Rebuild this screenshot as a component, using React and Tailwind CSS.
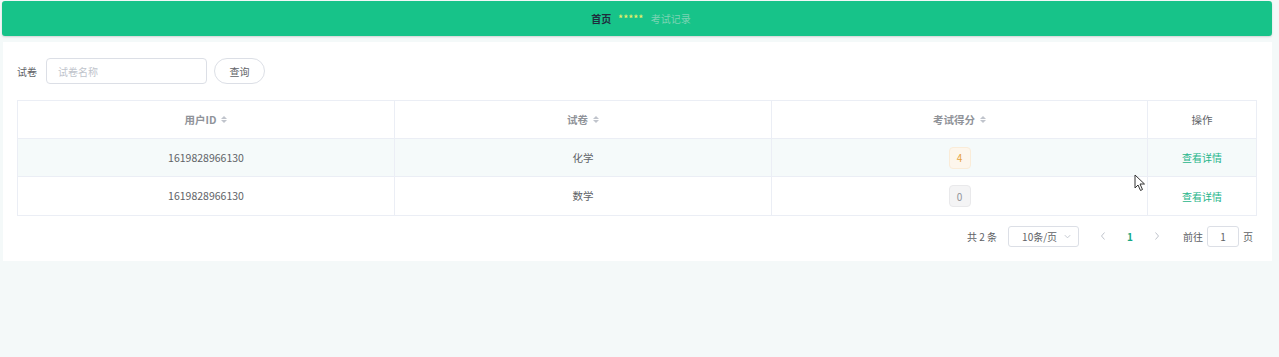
import React from "react";

const rows = [
  { id: "1619828966130", paper: "化学", score: 4 },
  { id: "1619828966130", paper: "数学", score: 0 },
];

const SortIcon = () => (
  <span className="ml-[5px] inline-flex flex-col items-center gap-[1px] align-middle">
    <span className="h-0 w-0 border-x-[3px] border-b-[3px] border-x-transparent border-b-[#c0c4cc]" />
    <span className="h-0 w-0 border-x-[3px] border-t-[3px] border-x-transparent border-t-[#c0c4cc]" />
  </span>
);

const Cursor = () => (
  <svg
    className="absolute left-[1134px] top-[174px]"
    width="12"
    height="18"
    viewBox="0 0 12 18"
  >
    <path
      d="M1 1 L1 14 L4 11 L6.5 16.5 L8.5 15.5 L6 10 L10.5 10 Z"
      fill="#fff"
      stroke="#333"
      strokeWidth="1"
      strokeLinejoin="round"
    />
  </svg>
);

const App = () => {
  return (
    <div
      className="relative h-[357px] w-full overflow-hidden bg-[#f4f9f9] pt-[1px] text-[10.5px] text-[#606266]"
      style={{ fontFamily: '"Noto Sans CJK SC", "Noto Sans", sans-serif' }}
    >
      {/* breadcrumb bar */}
      <div className="mx-[2px] mr-[7px] flex h-[35px] items-center justify-center rounded-[3px] bg-[#17c389] pl-[8px] shadow-[0_1px_2px_rgba(0,0,0,0.15)]">
        <span className="text-[10px] font-bold text-[#1f2d3d]">首页</span>
        <span className="mx-[7px] text-[9px] font-bold tracking-[0.5px] text-[#e8ef6a]">*****</span>
        <span className="text-[10px] text-[#7dd3b4]">考试记录</span>
      </div>

      <div className="mx-[3px] mr-[7px] mt-[6px] bg-white px-[14px] pb-[14px] pt-[16px]">
        {/* search form */}
        <div className="flex items-center">
          <span className="mr-[9px] text-[10px] text-[#606266]">试卷</span>
          <div className="flex h-[26px] w-[161px] items-center rounded-[4px] border border-[#dcdfe6] px-[11px] text-[10px] text-[#c0c4cc]">
            试卷名称
          </div>
          <button className="ml-[7px] h-[26px] w-[51px] rounded-full border border-[#dcdfe6] bg-white text-[10px] text-[#606266]">
            查询
          </button>
        </div>

        {/* table */}
        <div className="mt-[16px] mr-[1px] border border-[#ebeef5]">
          <div className="flex h-[38px] border-b border-[#ebeef5] font-bold text-[#909399]">
            <div className="flex w-[377px] items-center justify-center border-r border-[#ebeef5]">
              用户ID
              <SortIcon />
            </div>
            <div className="flex w-[377px] items-center justify-center border-r border-[#ebeef5]">
              试卷
              <SortIcon />
            </div>
            <div className="flex w-[376px] items-center justify-center border-r border-[#ebeef5]">
              考试得分
              <SortIcon />
            </div>
            <div className="flex flex-1 items-center justify-center font-normal text-[#606266]">
              操作
            </div>
          </div>
          {rows.map((r, i) => (
            <div
              key={i}
              className={
                "flex h-[38px] " +
                (i === 0 ? "border-b border-[#ebeef5] bg-[#f5fafa]" : "bg-white")
              }
            >
              <div className="flex w-[377px] items-center justify-center border-r border-[#ebeef5]">
                {r.id}
              </div>
              <div className="flex w-[377px] items-center justify-center border-r border-[#ebeef5]">
                {r.paper}
              </div>
              <div className="flex w-[376px] items-center justify-center border-r border-[#ebeef5]">
                {r.score > 0 ? (
                  <span className="flex h-[22px] w-[22px] items-center justify-center rounded-[4px] border border-[#faecd8] bg-[#fdf6ec] text-[10px] text-[#e6a23c]">
                    {r.score}
                  </span>
                ) : (
                  <span className="flex h-[22px] w-[22px] items-center justify-center rounded-[4px] border border-[#e9e9eb] bg-[#f4f4f5] text-[10px] text-[#909399]">
                    {r.score}
                  </span>
                )}
              </div>
              <div className="flex flex-1 items-center justify-center text-[10px] text-[#1fb58a]">
                查看详情
              </div>
            </div>
          ))}
        </div>

        {/* pagination */}
        <div className="mt-[9px] flex h-[22px] items-center justify-end pr-[5px] text-[10px] text-[#606266]">
          <span className="mr-[11px]">共 2 条</span>
          <div className="flex h-[21px] w-[71px] items-center justify-between rounded-[3px] border border-[#dcdfe6] pl-[13px] pr-[6px]">
            <span>10条/页</span>
            <svg width="9" height="9" viewBox="0 0 10 10">
              <path d="M2 3.5 L5 6.5 L8 3.5" fill="none" stroke="#c0c4cc" strokeWidth="1" />
            </svg>
          </div>
          <svg className="ml-[20px]" width="8" height="10" viewBox="0 0 8 10">
            <path d="M5.5 1.5 L2.5 5 L5.5 8.5" fill="none" stroke="#c0c4cc" strokeWidth="1" />
          </svg>
          <span className="mx-[20px] font-bold text-[#17a884]">1</span>
          <svg width="8" height="10" viewBox="0 0 8 10">
            <path d="M2.5 1.5 L5.5 5 L2.5 8.5" fill="none" stroke="#c0c4cc" strokeWidth="1" />
          </svg>
          <span className="ml-[22px] mr-[4px]">前往</span>
          <div className="flex h-[21px] w-[32px] items-center justify-center rounded-[3px] border border-[#dcdfe6]">
            1
          </div>
          <span className="ml-[4px]">页</span>
        </div>
      </div>

      <Cursor />
    </div>
  );
};

export default App;
